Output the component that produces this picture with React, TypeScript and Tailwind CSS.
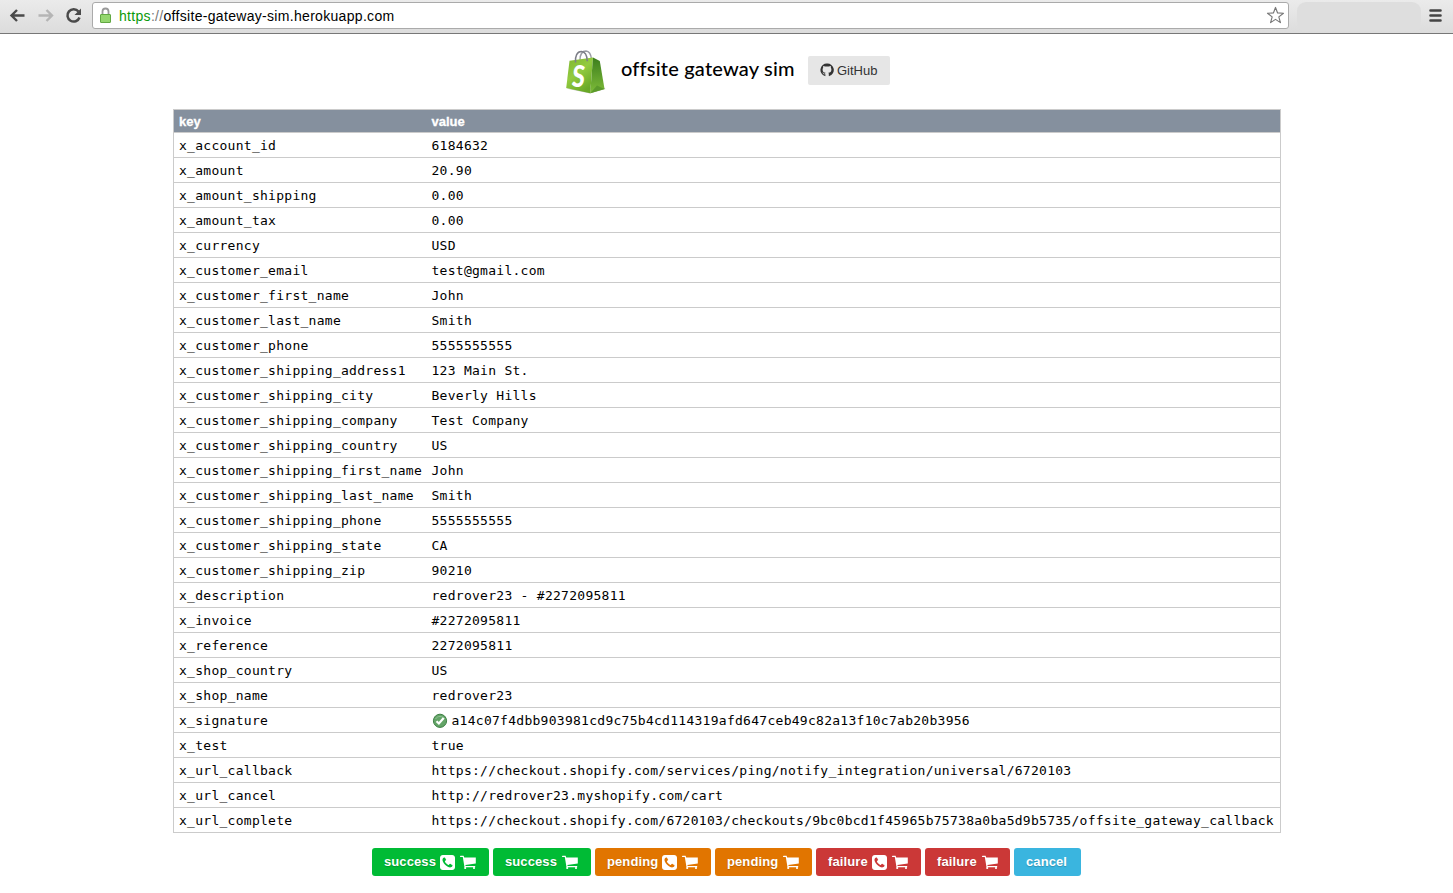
import React from "react";

const rows: [string, string][] = [
  ["x_account_id", "6184632"],
  ["x_amount", "20.90"],
  ["x_amount_shipping", "0.00"],
  ["x_amount_tax", "0.00"],
  ["x_currency", "USD"],
  ["x_customer_email", "test@gmail.com"],
  ["x_customer_first_name", "John"],
  ["x_customer_last_name", "Smith"],
  ["x_customer_phone", "5555555555"],
  ["x_customer_shipping_address1", "123 Main St."],
  ["x_customer_shipping_city", "Beverly Hills"],
  ["x_customer_shipping_company", "Test Company"],
  ["x_customer_shipping_country", "US"],
  ["x_customer_shipping_first_name", "John"],
  ["x_customer_shipping_last_name", "Smith"],
  ["x_customer_shipping_phone", "5555555555"],
  ["x_customer_shipping_state", "CA"],
  ["x_customer_shipping_zip", "90210"],
  ["x_description", "redrover23 - #2272095811"],
  ["x_invoice", "#2272095811"],
  ["x_reference", "2272095811"],
  ["x_shop_country", "US"],
  ["x_shop_name", "redrover23"],
  ["x_signature", "a14c07f4dbb903981cd9c75b4cd114319afd647ceb49c82a13f10c7ab20b3956"],
  ["x_test", "true"],
  ["x_url_callback", "https://checkout.shopify.com/services/ping/notify_integration/universal/6720103"],
  ["x_url_cancel", "http://redrover23.myshopify.com/cart"],
  ["x_url_complete", "https://checkout.shopify.com/6720103/checkouts/9bc0bcd1f45965b75738a0ba5d9b5735/offsite_gateway_callback"],
];

function Cart() {
  return (
    <svg viewBox="0 0 16 15" className="ml-px h-[15px] w-4 shrink-0 fill-white">
      <path d="M.6.800h3l.6 1.700h11.600v6.100L5.400 9.900l.2 1.200h9.600v1.200H4.500L2.800 2H.6a.6.6 0 0 1 0-1.200z" />
      <rect x="4.200" y="12" width="2" height="2" rx=".8" />
      <rect x="13" y="12" width="2" height="2" rx=".8" />
    </svg>
  );
}

function Phone() {
  return (
    <svg viewBox="0 0 1536 1536" className="h-[15px] w-[15px] shrink-0 fill-white">
      <path d="M1280 1056q0-11-2-16-3-8-38.500-29.500t-88.500-49.500l-53-29q-5-3-19-13t-25-15-21-5q-18 0-47 32.500t-57 65.500-44 33q-7 0-16.500-3.500t-15.500-6.500-17-9.500-14-8.500q-99-55-170.500-126.500t-126.500-170.500q-2-3-8.500-14t-9.500-17-6.500-15.500-3.500-16.500q0-13 20.500-33.500t45-38.500 45-39.500 20.500-36.500q0-10-5-21t-15-25-13-19q-3-6-15-28.500t-25-45.500-26.500-47.500-25-40.500-16.500-18-16-2q-48 0-101 22-46 21-80 94.500t-34 130.500q0 16 2.500 34t5 30.500 9 33 10 29.500 12.500 33 11 30q60 164 216.500 320.500t320.500 216.500q6 2 30 11t33 12.500 29.500 10 33 9 30.500 5 34 2.500q57 0 130.500-34t94.500-80q22-53 22-101zM1536 288v960q0 119-84.500 203.500t-203.500 84.500h-960q-119 0-203.500-84.500t-84.500-203.500v-960q0-119 84.500-203.500t203.500-84.500h960q119 0 203.500 84.500t84.500 203.500z" fillRule="evenodd" />
    </svg>
  );
}

function GithubMark() {
  return (
    <svg viewBox="0 0 14 14" className="mt-[-1px] mr-[3px] h-[14px] w-[14px] shrink-0">
      <path
        fill="#333"
        d="M7 .6a6.400 6.400 0 0 0-2.100 12.500c.4.100.5-.1.500-.3v-1.600c-2 .4-2.400-.7-2.400-.7-.3-.8-.7-1-.7-1 .9-.3 1.300.7 1.300.7.5.6 1 .6 1.600.4.1-.4.200-.6.400-.8C3.700 9.600 2.600 8.800 2.600 6.500c0-.7.200-1.300.6-1.700-.2-.6-.2-1.300.1-1.900.6 0 1.300.3 1.900.7.9-.2 2.700-.2 3.600 0 .6-.4 1.300-.7 1.900-.7.3.6.3 1.300.1 1.900.4.4.6 1 .6 1.700 0 2.300-1.100 3.100-3.100 3.300.3.300.5.700.5 1.300v1.700c0 .2.100.4.500.3A6.400 6.400 0 0 0 7 .6z"
      />
    </svg>
  );
}

function Bag() {
  return (
    <svg viewBox="0 0 44 48" className="mt-[14px] h-12 w-11 shrink-0">
      <defs>
        <linearGradient id="front" x1="0" y1="0" x2=".6" y2="1">
          <stop offset="0" stopColor="#7db52e" />
          <stop offset=".5" stopColor="#93cb40" />
          <stop offset="1" stopColor="#69a827" />
        </linearGradient>
        <linearGradient id="side" x1="0" y1="0" x2="0" y2="1">
          <stop offset="0" stopColor="#3c7d1d" />
          <stop offset="1" stopColor="#7fbd39" />
        </linearGradient>
      </defs>
      <path d="M2 40.500l24 5 15.500-4.500-2-2z" fill="#c9c9c9" />
      <path d="M16 12C16 7 18 3 22 3c3.500.2 5 4 5.500 8" fill="none" stroke="#9a9ca4" strokeWidth="1.400" />
      <path d="M5.500 12.800L29 9.500l-2.800 35.700L2.200 40z" fill="url(#front)" />
      <path d="M29 9.500l6.800 3.500L40.500 41l-14.300 4.200z" fill="url(#side)" />
      <path d="M26.200 45.200L33 37.500l7.500 3.500z" fill="#5b9a2b" />
      <path d="M11.500 14.500C11 8 13 3.500 17.500 3.600c4.500.2 5.500 4.400 5.800 9.600" fill="none" stroke="#7c7e87" strokeWidth="1.500" />
      <text x="10" y="39.500" fontSize="31" fontWeight="900" fontStyle="italic" fill="white" fontFamily="Lato, sans-serif" transform="scale(.8 1)">S</text>
    </svg>
  );
}

function ValidBadge() {
  return (
    <svg viewBox="0 0 16 16" className="mr-1 h-4 w-4 shrink-0">
      <circle cx="8" cy="7.800" r="6.600" fill="#63a467" stroke="#3d7f43" strokeWidth="1" />
      <path d="M3.500 6A5.300 5.300 0 0 1 12.500 6" fill="none" stroke="#8fc293" strokeWidth="1" />
      <path d="M4.500 8.200l2.400 2.300L11.700 5" fill="none" stroke="white" strokeWidth="2.200" />
    </svg>
  );
}

const buttons = [
  { label: "success", cls: "w-[117px] bg-[#00bb35]", text: "w-[52px]", phone: true, cart: true },
  { label: "success", cls: "w-[98px] bg-[#00bb35]", text: "w-[52px]", phone: false, cart: true },
  { label: "pending", cls: "w-[116px] bg-[#e17500]", text: "w-[51px]", phone: true, cart: true },
  { label: "pending", cls: "w-[97px] bg-[#e17500]", text: "w-[51px]", phone: false, cart: true },
  { label: "failure", cls: "w-[105px] bg-[#cb3837]", text: "w-[40px]", phone: true, cart: true },
  { label: "failure", cls: "w-[85px] bg-[#cb3837]", text: "w-[40px]", phone: false, cart: true },
  { label: "cancel", cls: "w-[67px] bg-[#3ab5df]", text: "w-[42px]", phone: false, cart: false },
];

export default function App() {
  return (
    <div className="flex h-[893px] w-[1453px] flex-col overflow-hidden bg-white font-['Liberation_Sans',sans-serif] text-black">
      <header className="flex h-[34px] shrink-0 items-start border-b border-[#777] bg-gradient-to-b from-[#ebebeb] to-[#dcdcdc] pt-[2px]">
        <svg viewBox="0 0 92 28" className="h-7 w-[92px] shrink-0" fill="none">
          <path d="M24.500 13.500H11.500M17 8l-5.500 5.500L17 19" stroke="#4a4a4a" strokeWidth="2.400" />
          <path d="M38.500 13.500h13M46.500 8l5.500 5.500-5.500 5.500" stroke="#b5b5b5" strokeWidth="2.400" />
          <path d="M78.500 9.500a6.200 6.200 0 1 0 1 6" stroke="#4a4a4a" strokeWidth="2.500" />
          <path d="M81 6.500v6.500h-6.500z" fill="#4a4a4a" />
        </svg>
        <div className="flex h-[27px] w-[1197px] shrink-0 items-center rounded-[3px] border border-[#aaa] bg-white pr-[3px] pl-[6px]">
          <svg viewBox="0 0 13 17" className="h-[17px] w-[13px] shrink-0">
            <path d="M3.500 8V4.500a3 3 0 0 1 6 0V8" fill="none" stroke="#999" strokeWidth="1.800" />
            <rect x="1.500" y="7.500" width="10" height="8" rx=".5" fill="#94d66e" stroke="#62a843" />
          </svg>
          <span className="ml-[7px] text-[14px] leading-5 tracking-[0.310px] whitespace-nowrap"><span className="text-[#0a9a0a]">https</span><span className="text-[#777]">://</span>offsite-gateway-sim.herokuapp.com</span>
          <svg viewBox="0 0 20 20" className="ml-auto h-[19px] w-[19px]" fill="white" stroke="#777" strokeWidth="1.200" strokeLinejoin="round">
            <path d="M10 1.500l2.200 5.800 6.200.3-4.900 3.900 1.700 6L10 14.100l-5.200 3.400 1.700-6-4.900-3.900 6.200-.3z" />
          </svg>
        </div>
        <div className="ml-2 h-[29px] w-[124px] shrink-0 rounded-[9px] bg-[#dedede]" />
        <svg viewBox="0 0 14 14" className="mt-[7px] ml-2 h-[14px] w-[14px] shrink-0" stroke="#444" strokeWidth="2.600" strokeLinecap="round">
          <path d="M1.500 1.500h10M1.500 6.500h10M1.500 11.500h10" />
        </svg>
      </header>

      <main className="flex flex-col">
        <div className="flex h-[75px] items-start pl-[564px]">
          <Bag />
          <h1 className="mt-[21px] ml-[13px] w-[187px] font-['Lato',sans-serif] text-[20px] leading-[26px] font-medium tracking-[0.200px] whitespace-nowrap">offsite gateway sim</h1>
          <a className="mt-[22px] flex h-[29px] w-[82px] items-center rounded-[2px] bg-[#e6e6e6] pl-3 text-[13px] text-[#333]">
            <GithubMark />
            <span>GitHub</span>
          </a>
        </div>

        <table className="ml-[173px] w-[1108px] table-fixed border-collapse border border-[#cbcbcb]">
          <colgroup>
            <col className="w-[253px]" />
            <col />
          </colgroup>
          <thead>
            <tr className="h-[23px] bg-[#85909e] text-left text-[13px] leading-[21px] text-white">
              <th className="px-[5px] pt-px pb-0 [-webkit-text-stroke:0.3px_white]">key</th>
              <th className="px-[5px] pt-px pb-0 [-webkit-text-stroke:0.3px_white]">value</th>
            </tr>
          </thead>
          <tbody className="font-['DejaVu_Sans_Mono',monospace] text-[13px] leading-[22px]">
            {rows.map(([k, v]) => (
              <tr key={k} className="h-[25px] border-t border-[#cbcbcb]">
                <td className="px-[5px] pt-[2px] pb-0 tracking-[0.274px] whitespace-nowrap">{k}</td>
                <td className="px-[5px] pt-[2px] pb-0 tracking-[0.274px] whitespace-nowrap">
                  <div className="flex items-center">
                    {k === "x_signature" && <ValidBadge />}
                    {v}
                  </div>
                </td>
              </tr>
            ))}
          </tbody>
        </table>

        <div className="mt-[15px] flex gap-1 pl-[372px]">
          {buttons.map((b, i) => (
            <button key={i} className={`${b.cls} flex h-7 items-center gap-1 rounded-[3px] pl-[12px] text-[13px] font-bold text-white [text-shadow:0_1px_1px_rgba(0,0,0,0.2)]`}>
              <span className={`${b.text} mt-[-1px] text-left tracking-[0.100px] whitespace-nowrap`}>{b.label}</span>
              {b.phone && <Phone />}
              {b.cart && <Cart />}
            </button>
          ))}
        </div>
      </main>
    </div>
  );
}
